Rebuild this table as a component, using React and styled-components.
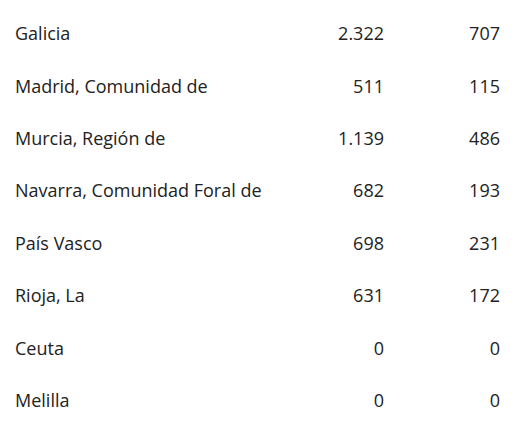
import React from "react";
import styled, { createGlobalStyle } from "styled-components";

const Global = createGlobalStyle`
  html, body { margin: 0; padding: 0; background: #fff; }
  body { font-family: "Open Sans", "Noto Sans", sans-serif; color: #222; }
`;

const Table = styled.div`
  display: grid;
  grid-template-columns: minmax(0, 1fr) 130px 116px;
  padding: 7px 16px 0 15px;
`;

const Cell = styled.div`
  height: 52.4px;
  display: flex;
  align-items: center;
  justify-content: ${(p) => (p.$num ? "flex-end" : "flex-start")};
  font-size: 18px;
  line-height: 1;
  white-space: nowrap;
`;

const rows = [
  ["Galicia", "2.322", "707"],
  ["Madrid, Comunidad de", "511", "115"],
  ["Murcia, Región de", "1.139", "486"],
  ["Navarra, Comunidad Foral de", "682", "193"],
  ["País Vasco", "698", "231"],
  ["Rioja, La", "631", "172"],
  ["Ceuta", "0", "0"],
  ["Melilla", "0", "0"],
];

export default function App() {
  return (
    <>
      <Global />
      <Table>
        {rows.map((r) => (
          <React.Fragment key={r[0]}>
            <Cell>{r[0]}</Cell>
            <Cell $num>{r[1]}</Cell>
            <Cell $num>{r[2]}</Cell>
          </React.Fragment>
        ))}
      </Table>
    </>
  );
}
